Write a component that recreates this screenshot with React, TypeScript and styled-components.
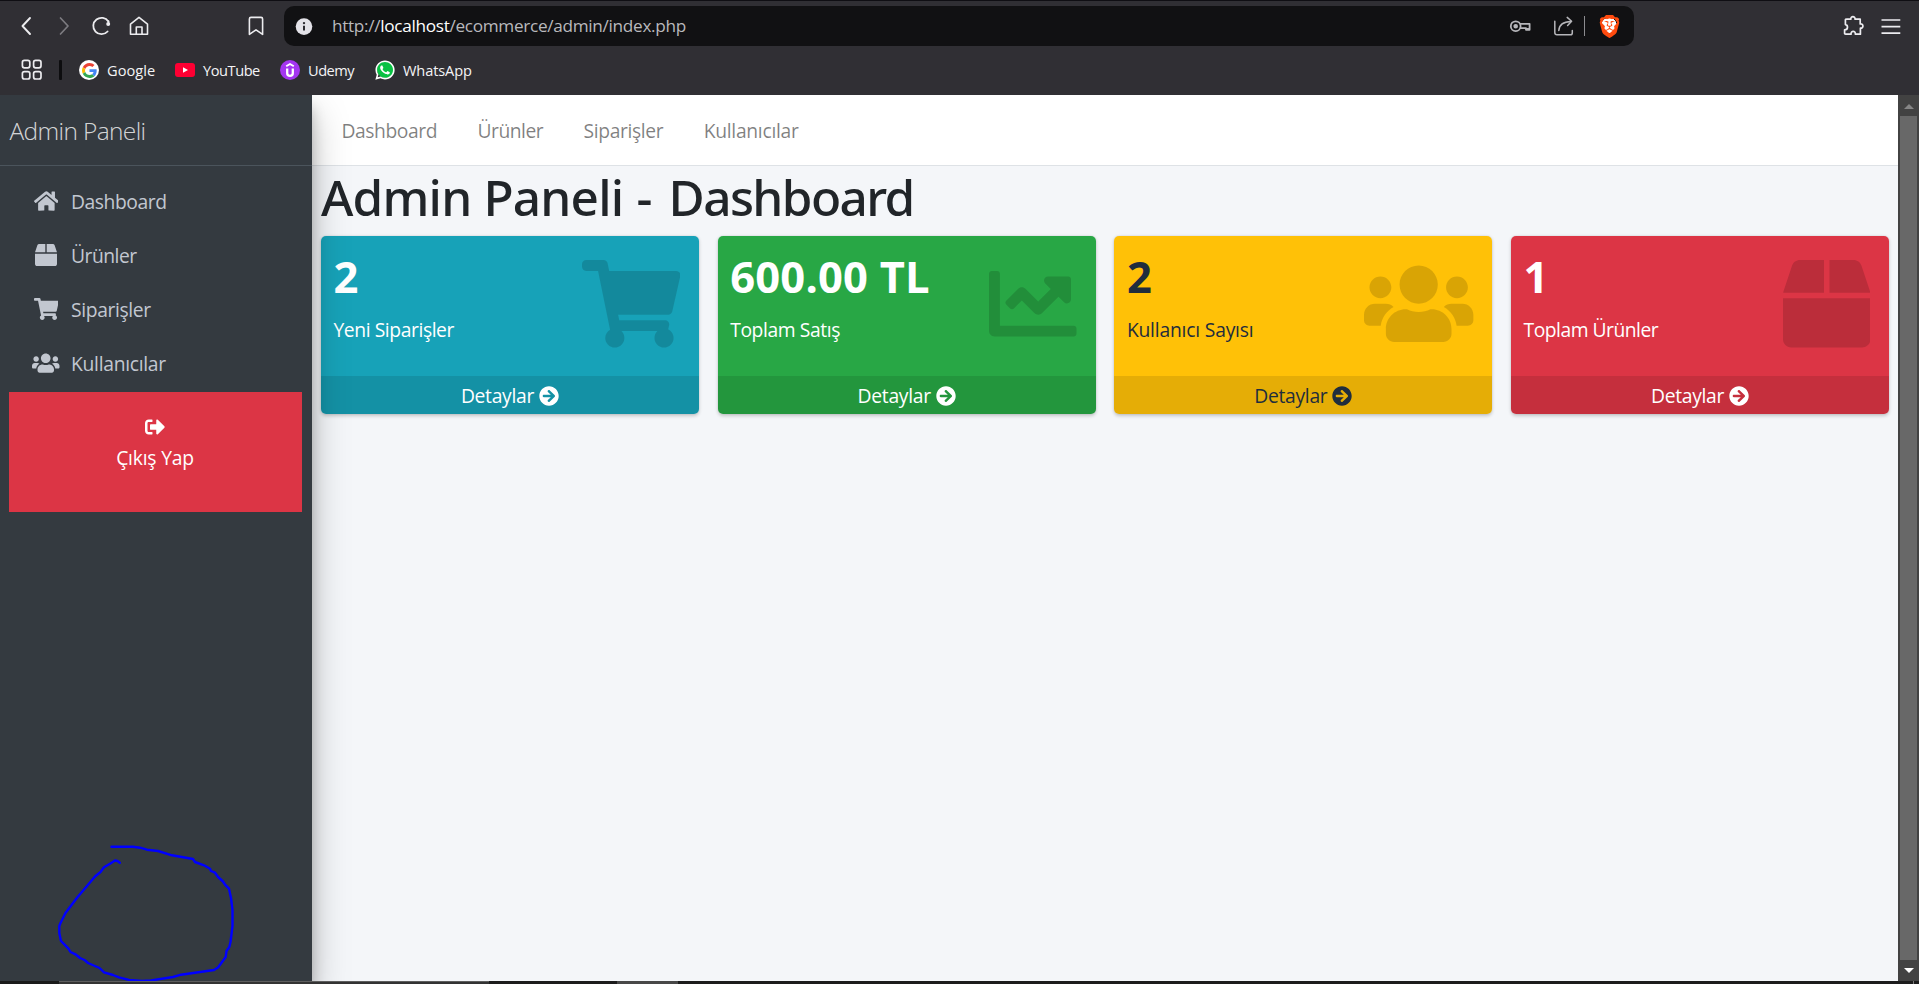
import React from "react";
import styled, { createGlobalStyle } from "styled-components";
import type { IconType } from "react-icons";
import {
  FaHome,
  FaBox,
  FaShoppingCart,
  FaUsers,
  FaSignOutAlt,
  FaChartLine,
  FaArrowCircleRight,
  FaWhatsapp,
} from "react-icons/fa";
import { SiBrave } from "react-icons/si";

const GlobalStyle = createGlobalStyle`
  * { box-sizing: border-box; }
  body {
    margin: 0;
    background: #1c1c1c;
    font-family: "Open Sans", "Noto Sans", sans-serif;
    font-size: 19.3px;
    line-height: 30px;
    color: #212529;
    overflow: hidden;
  }
  svg { display: block; flex: none; }
`;

const Screen = styled.div`
  display: flex;
  flex-direction: column;
  width: 1919px;
  height: 984px;
  overflow: hidden;
`;

const Label = styled.span<{ $track?: number }>`
  letter-spacing: ${(p) => p.$track ?? 0}px;
  white-space: nowrap;
`;

/* ---------- browser chrome ---------- */

const Chrome = styled.header`
  flex: none;
  height: 95px;
  background: #302f34;
  border-top: 1px solid #0f0e13;
  color: #f2f2f4;
`;

const Toolbar = styled.div`
  display: flex;
  align-items: center;
  height: 50px;
  padding: 0 18px 0 16px;
`;

const NavButtons = styled.div`
  display: flex;
  align-items: center;
  gap: 14px;
  width: 249px;
`;

const BookmarkButton = styled.span`
  margin-left: auto;
`;

const AddressBar = styled.div`
  display: flex;
  align-items: center;
  width: 1350px;
  height: 40px;
  margin-left: 19px;
  padding: 0 13px 0 11px;
  border-radius: 10px;
  background: #111113;
`;

const Url = styled.div`
  flex: 1;
  margin-left: 19px;
  font-size: 17.2px;
  letter-spacing: -0.31px;
  color: #b9b9bd;
  b { font-weight: 400; color: #fff; }
`;

const BarActions = styled.div`
  display: flex;
  align-items: center;
  gap: 22px;
`;

const ShieldSlot = styled.div`
  display: flex;
  align-items: center;
  margin-left: -13px;
`;

const BarDivider = styled.i`
  width: 1px;
  height: 20px;
  margin-right: 12px;
  background: #8c8c90;
`;

const ToolbarEnd = styled.div`
  display: flex;
  align-items: center;
  gap: 15px;
  margin-left: auto;
`;

const Bookmarks = styled.nav`
  display: flex;
  align-items: center;
  height: 38px;
  padding-left: 21px;
`;

const BookmarkDivider = styled.i`
  width: 3px;
  height: 20px;
  margin: 0 17px 0 16px;
  border-radius: 1px;
  background: #0d0d0f;
`;

const Bookmark = styled.a<{ $width: number }>`
  display: flex;
  align-items: center;
  gap: 8px;
  width: ${(p) => p.$width}px;
  font-size: 14.6px;
  line-height: 20px;
  color: #f4f4f6;
  > span:last-child { padding-bottom: 1px; }
`;

const Disc = styled.span<{ $bg: string }>`
  display: flex;
  align-items: center;
  justify-content: center;
  flex: none;
  width: 20px;
  height: 20px;
  border-radius: 50%;
  background: ${(p) => p.$bg};
  color: #fff;
`;

const ShieldBacking = styled.span`
  display: flex;
  align-items: center;
  justify-content: center;
  width: 24px;
  height: 24px;
  color: #ff4b0f;
  background: radial-gradient(circle at 50% 48%, #fff 0 7.5px, transparent 8px);
`;

const Line: React.FC<React.SVGProps<SVGSVGElement>> = (props) => (
  <svg fill="none" stroke="#ececef" strokeWidth="1.6" strokeLinecap="round" strokeLinejoin="round" {...props} />
);

const BrowserChrome = () => (
  <Chrome>
    <Toolbar>
      <NavButtons>
        <Line width="22" height="22" viewBox="0 0 22 22"><path d="M14 3L6.5 11L14 19" strokeWidth="1.9" /></Line>
        <Line width="24" height="22" viewBox="0 0 24 22" stroke="#7d7c81"><path d="M8.5 3L16 11L8.5 19" strokeWidth="1.7" /></Line>
        <Line width="24" height="22" viewBox="0 0 24 22">
          <path d="M17.6 16.5A8.2 8.2 0 1 1 18.4 6.6" strokeWidth="1.8" />
          <circle cx="18.2" cy="9" r="2" fill="#ececef" stroke="none" />
          <path d="M18.5 6v3" />
        </Line>
        <Line width="22" height="22" viewBox="0 0 22 22">
          <path d="M2.5 9.2L11 2.4L19.5 9.2V19.2H14V12H8.3V19.2H2.5Z" />
          <path d="M8.3 19.2H14" />
        </Line>
        <BookmarkButton>
          <Line width="18" height="22" viewBox="0 0 18 22">
            <path d="M4 2.4H14Q15.6 2.4 15.6 4V19.4L9 14.8L2.4 19.4V4Q2.4 2.4 4 2.4Z" />
          </Line>
        </BookmarkButton>
      </NavButtons>
      <AddressBar>
        <svg width="18" height="18" viewBox="0 0 18 18">
          <circle cx="9" cy="9.6" r="8.3" fill="#e3e2e8" />
          <path d="M9 8.8v4.6" stroke="#2b2a30" strokeWidth="2" />
          <circle cx="9" cy="6.1" r="1.2" fill="#2b2a30" />
        </svg>
        <Url>http://<b>localhost</b>/ecommerce/admin/index.php</Url>
        <BarActions>
          <Line width="22" height="20" viewBox="0 0 22 20" stroke="#b6b6ba" strokeWidth="1.8">
            <circle cx="6.7" cy="10.2" r="4.9" />
            <circle cx="6.7" cy="10.2" r="1.4" fill="#b6b6ba" />
            <path d="M11.4 7.8H20.6V13.8H17V12.2H11.4" />
            <path d="M17.2 12.8h3" />
          </Line>
          <Line width="22" height="20" viewBox="0 0 22 20" stroke="#b6b6ba" strokeWidth="1.5">
            <path d="M1.8 5.2V16.5Q1.8 18.8 4 18.8H17.5Q19.3 18.8 19.3 17V14.6" />
            <path d="M5.8 14.5C6.2 8.6 10.6 5.7 18 5.5" />
            <path d="M14.2 1.4L18.6 5.3L14.6 9.4" />
          </Line>
          <ShieldSlot>
            <BarDivider />
            <ShieldBacking><SiBrave size={23} /></ShieldBacking>
          </ShieldSlot>
        </BarActions>
      </AddressBar>
      <ToolbarEnd>
        <Line width="24" height="24" viewBox="0 0 24 24" strokeWidth="1.7">
          <path d="M5 5.2H8.8C8.4 1.8 13.4 1.8 13.1 5.2H18.2V10C21.8 9.4 21.8 14.6 18.4 14.2V20.2H13.4C13.6 16.4 8.8 16.4 9 20.2H3.6Q2.6 20.2 2.6 19.2V15.8C6.4 15.8 6.2 11 3.4 10.6V5.6Q3.4 5.2 5 5.2Z" />
        </Line>
        <Line width="20" height="20" viewBox="0 0 20 20" strokeWidth="1.7" strokeLinecap="butt">
          <path d="M.5 4H19.3M.5 10.6H19.3M.5 17.2H19.3" />
        </Line>
      </ToolbarEnd>
    </Toolbar>
    <Bookmarks>
      <Line width="22" height="22" viewBox="0 0 22 22" strokeWidth="1.7">
        <rect x="1.4" y="1.4" width="7.4" height="7.4" rx="2" />
        <rect x="12.6" y="1.4" width="7.4" height="7.4" rx="2" />
        <rect x="1.4" y="12.6" width="7.4" height="7.4" rx="2" />
        <rect x="12.6" y="12.6" width="7.4" height="7.4" rx="2" />
      </Line>
      <BookmarkDivider />
      <Bookmark $width={96}>
        <Disc $bg="#fff">
          <svg width="15" height="15" viewBox="0 0 48 48">
            <path fill="#EA4335" d="M24 9.5c3.54 0 6.71 1.22 9.21 3.6l6.85-6.85C35.9 2.38 30.47 0 24 0 14.62 0 6.51 5.38 2.56 13.22l7.98 6.19C12.43 13.72 17.74 9.5 24 9.5z" />
            <path fill="#4285F4" d="M46.98 24.55c0-1.57-.15-3.09-.38-4.55H24v9.02h12.94c-.58 2.96-2.26 5.48-4.78 7.18l7.73 6c4.51-4.18 7.09-10.36 7.09-17.65z" />
            <path fill="#FBBC05" d="M10.53 28.59c-.48-1.45-.76-2.99-.76-4.59s.27-3.14.76-4.59l-7.98-6.19C.92 16.46 0 20.12 0 24c0 3.88.92 7.54 2.56 10.78l7.97-6.19z" />
            <path fill="#34A853" d="M24 48c6.48 0 11.93-2.13 15.89-5.81l-7.73-6c-2.15 1.45-4.92 2.3-8.16 2.3-6.26 0-11.57-4.22-13.47-9.91l-7.98 6.19C6.51 42.62 14.62 48 24 48z" />
          </svg>
        </Disc>
        <Label $track={0.04}>Google</Label>
      </Bookmark>
      <Bookmark $width={105}>
        <svg width="20" height="14" viewBox="0 0 20 14">
          <rect width="20" height="14" rx="3" fill="#ff0033" />
          <path d="M8 4.2L13 7L8 9.8Z" fill="#fff" />
        </svg>
        <Label $track={-0.45}>YouTube</Label>
      </Bookmark>
      <Bookmark $width={95}>
        <Disc $bg="#a435f0">
          <svg width="20" height="20" viewBox="0 0 20 20" fill="none" stroke="#fff">
            <path d="M6.2 6.3L10 4L13.8 6.3" strokeWidth="1.9" />
            <path d="M7.2 8.6V13.2Q7.2 15.8 10 15.8T12.8 13.2V8.6" strokeWidth="2.3" />
          </svg>
        </Disc>
        <Label $track={-0.5}>Udemy</Label>
      </Bookmark>
      <Bookmark $width={100}>
        <Disc $bg="radial-gradient(circle at 52% 48%, #09c143 0 8px, transparent 8.6px)">
          <FaWhatsapp size={22} />
        </Disc>
        <Label $track={-0.12}>WhatsApp</Label>
      </Bookmark>
    </Bookmarks>
  </Chrome>
);

/* ---------- admin page ---------- */

const Viewport = styled.div`
  position: relative;
  display: flex;
  flex: none;
  height: 886px;
  overflow: hidden;
  background: #f4f6f9;
`;

const Sidebar = styled.aside`
  position: relative;
  z-index: 2;
  flex: none;
  width: 312px;
  background: #343a40;
  box-shadow: 0 17.5px 35px rgba(0, 0, 0, 0.25), 0 12.5px 12.5px rgba(0, 0, 0, 0.22);
`;

const Brand = styled.a`
  display: block;
  height: 71px;
  padding: 1px 0 0 9.5px;
  border-bottom: 1px solid #4b545c;
  font-size: 24.5px;
  font-weight: 300;
  line-height: 70px;
  color: rgba(255, 255, 255, 0.8);
`;

const Menu = styled.nav`
  display: flex;
  flex-direction: column;
  padding: 9px 10px 0 9px;
`;

const MenuItem = styled.a`
  display: flex;
  align-items: center;
  height: 54px;
  padding-left: 22px;
  color: #c2c7d0;
`;

const MenuIcon = styled.span`
  display: flex;
  justify-content: center;
  width: 30px;
  margin: -2px 10px 0 0;
`;

const Glyph = styled.span<{ $size: number; $ratio: number }>`
  display: block;
  svg {
    width: ${(p) => p.$size * p.$ratio}px;
    height: ${(p) => p.$size}px;
  }
`;

const Logout = styled.a`
  display: flex;
  flex-direction: column;
  align-items: center;
  height: 120px;
  margin-top: 1px;
  padding: 25px 1px 0 0;
  background: #dc3545;
  color: #fff;
`;

const LogoutLabel = styled(Label)`
  margin-top: 6px;
`;

const Content = styled.main`
  flex: 1;
  min-width: 0;
`;

const TopNav = styled.nav`
  display: flex;
  align-items: center;
  height: 71px;
  padding: 1px 0 0 9.3px;
  border-bottom: 1px solid #dee2e6;
  background: #fff;
  color: rgba(0, 0, 0, 0.5);
`;

const TopLink = styled.a`
  padding: 0 20.2px;
`;

const Title = styled.h1`
  margin: 0 0 9px 9px;
  padding-top: 1px;
  font-family: "Noto Sans", "Open Sans", sans-serif;
  font-size: 49.5px;
  font-weight: 500;
  line-height: 60px;
  letter-spacing: -0.8px;
`;

const TitleDash = styled.span`
  margin: 0 5px 0 1px;
`;

const Cards = styled.section`
  display: grid;
  grid-template-columns: repeat(4, 1fr);
  gap: 18.75px;
  padding: 0 9px;
`;

const Card = styled.article<{ $bg: string; $dark?: boolean }>`
  display: flex;
  flex-direction: column;
  height: 178px;
  overflow: hidden;
  border-radius: 5px;
  background: ${(p) => p.$bg};
  color: ${(p) => (p.$dark ? "#1f2d3d" : "#fff")};
`;

const CardShell = styled.div`
  border-radius: 5px;
  box-shadow: 0 0 1.25px rgba(0, 0, 0, 0.13), 0 1.25px 3.75px rgba(0, 0, 0, 0.2);
`;

const CardBody = styled.div`
  display: flex;
  justify-content: space-between;
  height: 140px;
  padding: 18px 18.75px 0 12.5px;
`;

const Figure = styled.div`
  margin-bottom: 16px;
  font-size: 43.5px;
  font-weight: 700;
  line-height: 45px;
`;

const CardIcon = styled(Glyph)`
  margin-top: 6px;
  color: rgba(0, 0, 0, 0.15);
`;

const CardFooter = styled.a`
  display: flex;
  align-items: center;
  justify-content: center;
  gap: 5px;
  height: 38px;
  padding-top: 1px;
  background: rgba(0, 0, 0, 0.1);
`;

const ScrollTrack = styled.div`
  display: flex;
  flex-direction: column;
  align-items: center;
  flex: none;
  width: 21px;
  padding: 9px 0 8px;
  background: #424242;
`;

const ScrollThumb = styled.div`
  flex: 1;
  width: 17px;
  margin: 7px 0 8px;
  background: #686868;
`;

const Sketch = styled.svg`
  position: absolute;
  z-index: 3;
  left: 50px;
  bottom: -3px;
`;

const Taskbar = styled.footer`
  display: flex;
  flex: 1;
  background: #1c1c1c;
`;

const TaskSegment = styled.div<{ $w: number; $bg: string; $edge?: boolean }>`
  width: ${(p) => p.$w}px;
  background: ${(p) => p.$bg};
  border-top: ${(p) => (p.$edge ? "1px solid #5e5e5e" : "0")};
`;

type Item = { text: string; track: number; icon: IconType; ratio: number };

const menu: Item[] = [
  { text: "Dashboard", track: -0.43, icon: FaHome, ratio: 1.125 },
  { text: "Ürünler", track: -0.5, icon: FaBox, ratio: 1 },
  { text: "Siparişler", track: -0.37, icon: FaShoppingCart, ratio: 1.125 },
  { text: "Kullanıcılar", track: -0.29, icon: FaUsers, ratio: 1.25 },
];

const cards: (Item & { bg: string; dark?: boolean; value: string })[] = [
  { bg: "#17a2b8", value: "2", text: "Yeni Siparişler", track: -0.42, icon: FaShoppingCart, ratio: 1.125 },
  { bg: "#28a745", value: "600.00 TL", text: "Toplam Satış", track: -0.4, icon: FaChartLine, ratio: 1 },
  { bg: "#ffc107", dark: true, value: "2", text: "Kullanıcı Sayısı", track: -0.2, icon: FaUsers, ratio: 1.25 },
  { bg: "#dc3545", value: "1", text: "Toplam Ürünler", track: -0.5, icon: FaBox, ratio: 1 },
];

export default function App() {
  return (
    <Screen>
      <GlobalStyle />
      <BrowserChrome />
      <Viewport>
        <Sidebar>
          <Brand><Label $track={-0.64}>Admin Paneli</Label></Brand>
          <Menu>
            {menu.map(({ text, track, icon: Icon, ratio }) => (
              <MenuItem key={text}>
                <MenuIcon><Glyph $size={22} $ratio={ratio}><Icon /></Glyph></MenuIcon>
                <Label $track={track}>{text}</Label>
              </MenuItem>
            ))}
            <Logout>
              <FaSignOutAlt size={20} />
              <LogoutLabel $track={-0.2}>Çıkış Yap</LogoutLabel>
            </Logout>
          </Menu>
        </Sidebar>
        <Content>
          <TopNav>
            {menu.map(({ text, track }) => (
              <TopLink key={text}><Label $track={track}>{text}</Label></TopLink>
            ))}
          </TopNav>
          <Title>
            Admin Paneli <TitleDash>-</TitleDash> <Label $track={-1.6}>Dashboard</Label>
          </Title>
          <Cards>
            {cards.map(({ bg, dark, value, text, track, icon: Icon, ratio }) => (
              <CardShell key={text}>
                <Card $bg={bg} $dark={dark}>
                  <CardBody>
                    <div>
                      <Figure><Label $track={0.2}>{value}</Label></Figure>
                      <Label $track={track}>{text}</Label>
                    </div>
                    <CardIcon $size={87.5} $ratio={ratio}><Icon /></CardIcon>
                  </CardBody>
                  <CardFooter>
                    <Label $track={-0.3}>Detaylar</Label>
                    <FaArrowCircleRight size={20} />
                  </CardFooter>
                </Card>
              </CardShell>
            ))}
          </Cards>
        </Content>
        <ScrollTrack>
          <svg width="10" height="5" viewBox="0 0 10 5"><path d="M0 5L5 0L10 5Z" fill="#868686" /></svg>
          <ScrollThumb />
          <svg width="10" height="5" viewBox="0 0 10 5"><path d="M0 0L5 5L10 0Z" fill="#fff" /></svg>
        </ScrollTrack>
        <Sketch width="190" height="144" viewBox="50 840 190 144" fill="none" stroke="#0000ff" strokeWidth="2.4" strokeLinecap="round" strokeLinejoin="round">
          <path d="M111.5 846.7L133 846.7L140 847.7L147 849.7L158 851L172 855.3L193 859L195 862L204 865.3L210 868.7L211 871L215 872.7L218 877L223 881.5L225 884.7L229 888.7L231 898L232.5 910V926L230.5 942L229.3 947L226.5 951L225.7 957L218 967.5L214 970L181 974.7L173 977L151 980.5L142 981L129 980L119 977.3L113 975L104 972.3L99.5 968L88 963L84.5 960L80 958L76 954.7L70.5 952L68.5 948.7L61 941L59.3 933V926L60.5 923L65.5 913L77 897.7L95 876.5L100.5 872L104 867.3L110 863.7L115 860.5L117.5 861L119.8 862.8" />
        </Sketch>
      </Viewport>
      <Taskbar>
        <TaskSegment $w={59} $bg="#1a1a1a" />
        <TaskSegment $w={430} $bg="#333333" $edge />
        <TaskSegment $w={128} $bg="#1c1c1c" />
        <TaskSegment $w={61} $bg="#484848" />
        <TaskSegment $w={1235} $bg="#1c1c1c" />
        <TaskSegment $w={1} $bg="#777777" />
      </Taskbar>
    </Screen>
  );
}
